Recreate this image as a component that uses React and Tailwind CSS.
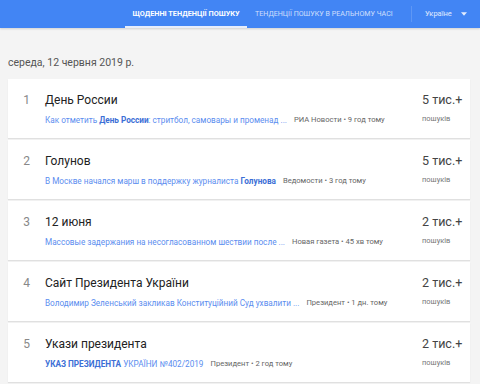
const items = [
  {
    n: 1,
    title: 'День России',
    link: [['Как отметить ', false], ['День России', true], [': стритбол, самовары и променад ...', false]],
    source: 'РИА Новости • 9 год тому',
    count: '5 тис.+',
  },
  {
    n: 2,
    title: 'Голунов',
    link: [['В Москве начался марш в поддержку журналиста ', false], ['Голунова', true]],
    source: 'Ведомости • 3 год тому',
    count: '5 тис.+',
  },
  {
    n: 3,
    title: '12 июня',
    link: [['Массовые задержания на несогласованном шествии после ...', false]],
    source: 'Новая газета • 45 хв тому',
    count: '2 тис.+',
  },
  {
    n: 4,
    title: 'Сайт Президента України',
    link: [['Володимир Зеленський закликав Конституційний Суд ухвалити ...', false]],
    source: 'Президент • 1 дн. тому',
    count: '2 тис.+',
  },
  {
    n: 5,
    title: 'Укази президента',
    link: [['УКАЗ ПРЕЗИДЕНТА', true], [' УКРАЇНИ №402/2019', false]],
    source: 'Президент • 2 год тому',
    count: '2 тис.+',
  },
]

function Row({ item }) {
  return (
    <div className="flex h-[59px] bg-white shadow-[0_1px_1px_rgba(0,0,0,0.08)]">
      <div className="w-[37px] pt-[13px] text-center text-[12px] leading-[16px] text-[#888]">{item.n}</div>
      <div className="flex-1 min-w-0 flex flex-col pt-[13px]">
        <div className="text-[12px] leading-[16px] text-[#222]">{item.title}</div>
        <div className="flex items-center mt-[6px] text-[8.2px] leading-[12px] whitespace-nowrap">
          <span className="text-[#5b8def]">
            {item.link.map(([t, b], i) => (
              <span key={i} className={b ? 'font-bold text-[#3c6fd6]' : ''}>{t}</span>
            ))}
          </span>
          <span className="ml-[7px] text-[7.6px] text-[#666]">{item.source}</span>
        </div>
      </div>
      <div className="w-[48px] flex flex-col pt-[12px] whitespace-nowrap">
        <div className="text-[12.5px] leading-[18px] text-[#444]">{item.count}</div>
        <div className="mt-[4px] text-[7.5px] leading-[12px] text-[#777]">пошуків</div>
      </div>
    </div>
  )
}

export default function App() {
  return (
    <div className="w-[480px] h-[384px] overflow-hidden bg-[#f4f4f4] font-['Roboto',sans-serif]">
      <div className="h-[28px] bg-[#4285f4] flex items-stretch shadow-[0_1px_2px_rgba(0,0,0,0.15)]">
        <div className="w-[125px]" />
        <div className="w-[122px] flex items-center justify-center border-b-[2px] border-[#e6edfb] pt-[2px] text-[7.3px] font-bold text-white whitespace-nowrap">
          ЩОДЕННІ ТЕНДЕНЦІЇ ПОШУКУ
        </div>
        <div className="w-[164px] flex items-center pl-[8px] text-[7.1px] text-white/75 whitespace-nowrap">
          ТЕНДЕНЦІЇ ПОШУКУ В РЕАЛЬНОМУ ЧАСІ
        </div>
        <div className="my-[6px] w-px bg-white/15" />
        <div className="flex items-center pl-[13px] text-[7.5px] text-white/85">
          Україне
          <svg className="ml-[9px]" width="6" height="4" viewBox="0 0 7 4"><path d="M0 0h7L3.5 4z" fill="rgba(255,255,255,0.85)" /></svg>
        </div>
      </div>
      <div className="pl-[8px] pt-[28px] pb-[9px] text-[10.5px] leading-[14px] text-[#555]">середа, 12 червня 2019 р.</div>
      <div className="ml-[8px] mr-[10px] flex flex-col gap-[2px]">
        {items.map((it) => <Row key={it.n} item={it} />)}
      </div>
    </div>
  )
}
